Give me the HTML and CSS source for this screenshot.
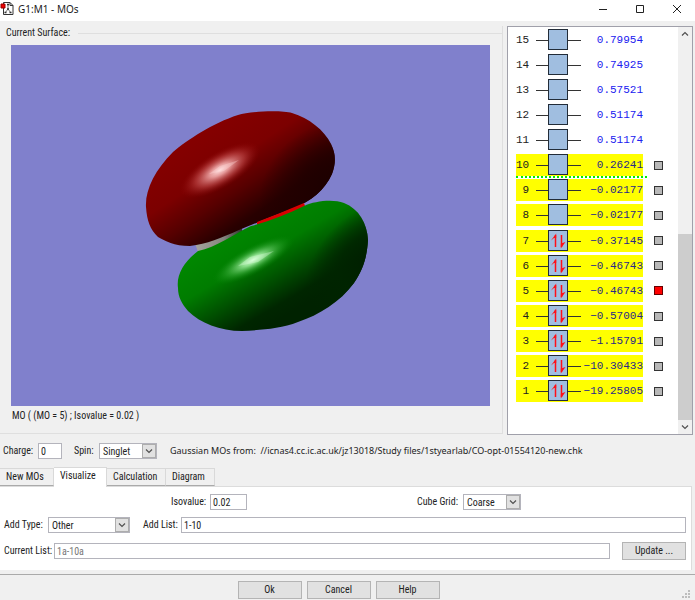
FILE: index.html
```html
<!DOCTYPE html>
<html lang="en">
<head>
<meta charset="utf-8">
<title>G1:M1 - MOs</title>
<link rel="stylesheet" href="styles.css">
</head>
<body>
<svg class="defs" width="0" height="0" aria-hidden="true">
  <symbol id="empty" viewBox="0 0 45 21"><path d="M0 11.500H45" stroke="#333"/><rect x="12.500" y=".5" width="19" height="20" fill="#a0bee0" stroke="#222c38"/></symbol>
  <symbol id="pair" viewBox="0 0 45 21"><path d="M0 11.500H45" stroke="#333"/><rect x="12.500" y=".5" width="19" height="20" fill="#a0bee0" stroke="#222c38"/><path d="M19.500 17V5M25.500 5V17" fill="none" stroke="#ff1018" stroke-width="1.500"/><path d="M20.200 3.500V8L18 8L15 10.500ZM24.800 18.500V13.500L26.500 13L29.500 12Z" fill="#ff1018"/></symbol>
  <symbol id="chevron" viewBox="0 0 8 8"><path d="M1 2.500L4 5.500L7 2.500" fill="none" stroke="#505050" stroke-width="1.200"/></symbol>
</svg>
<div class="window">
  <header class="titlebar">
    <svg class="app-icon" viewBox="0 0 14 15"><path d="M3.500 1.500H10L13 4.500V13.500H3.500Z" fill="#fff" stroke="#333"/><path d="M10 1.500V4.500H13" fill="none" stroke="#333"/><path d="M8 4V8L5 12M8 8L11 12" fill="none" stroke="#777"/><path d="M7 3.500H9M7 8H9M4.500 11.500H6.500M9.500 11.500H11.500" stroke="#333" stroke-width="1.500"/><path d="M1 3H5V7H1Z" fill="#f00000" stroke="#900"/></svg>
    <h1>G1:M1 - MOs</h1>
    <button class="win-btn" aria-label="Minimize"><svg viewBox="0 0 10 10"><path d="M1 5.500H9" stroke="#222"/></svg></button>
    <button class="win-btn" aria-label="Maximize"><svg viewBox="0 0 10 10"><path d="M1.500 1.500H8.500V8.500H1.500Z" fill="none" stroke="#222"/></svg></button>
    <button class="win-btn" aria-label="Close"><svg viewBox="0 0 10 10"><path d="M1 1L9 9M9 1L1 9" stroke="#222"/></svg></button>
  </header>

  <main class="workspace">
    <section class="surface">
      <h2>Current Surface:</h2>
      <div class="viewport">
        <svg viewBox="11 45 479 361" role="img" aria-label="Molecular orbital surface">
          <defs>
            <linearGradient id="redBody" gradientUnits="userSpaceOnUse" x1="205" y1="130" x2="268" y2="226"><stop offset="0" stop-color="#850000"/><stop offset=".35" stop-color="#7c0000"/><stop offset=".6" stop-color="#560000"/><stop offset=".85" stop-color="#280000"/><stop offset="1" stop-color="#200000"/></linearGradient>
            <radialGradient id="redShade" gradientUnits="userSpaceOnUse" cx="0" cy="0" r="1" gradientTransform="translate(330 185) rotate(-35) scale(75 60)"><stop offset="0" stop-color="#1c0000"/><stop offset=".4" stop-color="#200000" stop-opacity=".85"/><stop offset="1" stop-color="#200000" stop-opacity="0"/></radialGradient>
            <linearGradient id="greenBody" gradientUnits="userSpaceOnUse" x1="240" y1="228" x2="290" y2="313"><stop offset="0" stop-color="#008800"/><stop offset=".35" stop-color="#007c00"/><stop offset=".62" stop-color="#005000"/><stop offset=".87" stop-color="#002600"/><stop offset="1" stop-color="#002200"/></linearGradient>
            <radialGradient id="greenShade" gradientUnits="userSpaceOnUse" cx="0" cy="0" r="1" gradientTransform="translate(365 260) rotate(-45) scale(70 45)"><stop offset="0" stop-color="#002000"/><stop offset=".45" stop-color="#002400" stop-opacity=".85"/><stop offset="1" stop-color="#002400" stop-opacity="0"/></radialGradient>
            <radialGradient id="redGlow"><stop offset="0" stop-color="#ffe0e0"/><stop offset=".25" stop-color="#f0a8a8" stop-opacity=".9"/><stop offset=".6" stop-color="#c85050" stop-opacity=".55"/><stop offset="1" stop-color="#880000" stop-opacity="0"/></radialGradient>
            <radialGradient id="greenGlow"><stop offset="0" stop-color="#d8ffd8"/><stop offset=".25" stop-color="#98e898" stop-opacity=".9"/><stop offset=".6" stop-color="#40b040" stop-opacity=".55"/><stop offset="1" stop-color="#008000" stop-opacity="0"/></radialGradient>
            <linearGradient id="bond" x1="0" x2="1"><stop offset="0" stop-color="#a5a59e"/><stop offset=".6" stop-color="#85857f"/><stop offset="1" stop-color="#30302c"/></linearGradient>
          </defs>
          <path d="M195 243L198 252Q222 250 243 233L241 226Z" fill="url(#bond)"/>
          <path d="M146 207C145 190 155 170 173 152C187 140 213 123 238 115C250 111 282 110 292 113C309 118 324 130 331 144C336 154 336 163 332 174C325 190 311 201 294 208C276 215 256 223 239 230C221 238 207 244 190 246C174 246 165 241 158 237C150 229 147 221 146 207Z" fill="url(#redBody)"/>
          <path d="M146 207C145 190 155 170 173 152C187 140 213 123 238 115C250 111 282 110 292 113C309 118 324 130 331 144C336 154 336 163 332 174C325 190 311 201 294 208C276 215 256 223 239 230C221 238 207 244 190 246C174 246 165 241 158 237C150 229 147 221 146 207Z" fill="url(#redShade)"/>
          <ellipse cx="220" cy="170" rx="46" ry="18" transform="rotate(-31 220 170)" fill="url(#redGlow)"/>
          <path d="M209 174L220 166L239 160L224 171Z" fill="#ffdada" opacity=".35"/>
          <path d="M257 225Q284 220 305 206L304 203Q281 213 257 222Z" fill="#d80000"/>
          <path d="M178 288C176 274 185 261 198 251C216 248 235 233 251 226C270 221 288 214 304 206C315 201 333 199 344 203C359 209 367 223 368 240C367 257 363 270 354 283C340 302 319 315 298 322C280 329 260 330 242 331C220 331 200 323 188 311C182 304 178 297 178 288Z" fill="url(#greenBody)"/>
          <path d="M178 288C176 274 185 261 198 251C216 248 235 233 251 226C270 221 288 214 304 206C315 201 333 199 344 203C359 209 367 223 368 240C367 257 363 270 354 283C340 302 319 315 298 322C280 329 260 330 242 331C220 331 200 323 188 311C182 304 178 297 178 288Z" fill="url(#greenShade)"/>
          <ellipse cx="253" cy="260" rx="46" ry="14" transform="rotate(-28 253 260)" fill="url(#greenGlow)"/>
          <path d="M238 266L250 257L274 251L258 262Z" fill="#e0ffe0" opacity=".35"/>
        </svg>
      </div>
      <p class="caption">MO ( (MO = 5) ; Isovalue = 0.02 )</p>
    </section>

    <section class="orbitals">
      <table class="levels">
        <tbody>
          <tr><td>15</td><td><svg><use href="#empty"/></svg></td><td>0.79954</td></tr>
          <tr><td>14</td><td><svg><use href="#empty"/></svg></td><td>0.74925</td></tr>
          <tr><td>13</td><td><svg><use href="#empty"/></svg></td><td>0.57521</td></tr>
          <tr><td>12</td><td><svg><use href="#empty"/></svg></td><td>0.51174</td></tr>
          <tr><td>11</td><td><svg><use href="#empty"/></svg></td><td>0.51174</td></tr>
          <tr class="on frontier"><td>10</td><td><svg><use href="#empty"/></svg></td><td>0.26241</td><td><input type="radio" name="mo" aria-label="Show MO 10"></td></tr>
          <tr class="on"><td>9</td><td><svg><use href="#empty"/></svg></td><td>−0.02177</td><td><input type="radio" name="mo" aria-label="Show MO 9"></td></tr>
          <tr class="on"><td>8</td><td><svg><use href="#empty"/></svg></td><td>−0.02177</td><td><input type="radio" name="mo" aria-label="Show MO 8"></td></tr>
          <tr class="on"><td>7</td><td><svg><use href="#pair"/></svg></td><td>−0.37145</td><td><input type="radio" name="mo" aria-label="Show MO 7"></td></tr>
          <tr class="on"><td>6</td><td><svg><use href="#pair"/></svg></td><td>−0.46743</td><td><input type="radio" name="mo" aria-label="Show MO 6"></td></tr>
          <tr class="on"><td>5</td><td><svg><use href="#pair"/></svg></td><td>−0.46743</td><td><input type="radio" name="mo" aria-label="Show MO 5" checked></td></tr>
          <tr class="on"><td>4</td><td><svg><use href="#pair"/></svg></td><td>−0.57004</td><td><input type="radio" name="mo" aria-label="Show MO 4"></td></tr>
          <tr class="on"><td>3</td><td><svg><use href="#pair"/></svg></td><td>−1.15791</td><td><input type="radio" name="mo" aria-label="Show MO 3"></td></tr>
          <tr class="on"><td>2</td><td><svg><use href="#pair"/></svg></td><td>−10.30433</td><td><input type="radio" name="mo" aria-label="Show MO 2"></td></tr>
          <tr class="on"><td>1</td><td><svg><use href="#pair"/></svg></td><td>−19.25805</td><td><input type="radio" name="mo" aria-label="Show MO 1"></td></tr>
        </tbody>
      </table>
      <div class="scrollbar">
        <button aria-label="Scroll up"><svg class="up"><use href="#chevron"/></svg></button>
        <div class="track"><div class="thumb"></div></div>
        <button aria-label="Scroll down"><svg><use href="#chevron"/></svg></button>
      </div>
    </section>
  </main>

  <div class="state">
    <label for="charge">Charge:</label><input id="charge" class="charge" value="0">
    <label for="spin" class="spin-label">Spin:</label>
    <span class="select spin"><select id="spin"><option>Singlet</option></select><svg><use href="#chevron"/></svg></span>
    <p class="source">Gaussian MOs from: &nbsp;//icnas4.cc.ic.ac.uk/jz13018/Study files/1styearlab/CO-opt-01554120-new.chk</p>
  </div>

  <nav class="tabs" role="tablist">
    <button role="tab" class="t-new">New MOs</button><button role="tab" class="active" aria-selected="true">Visualize</button><button role="tab" class="t-calc">Calculation</button><button role="tab" class="t-diag">Diagram</button>
  </nav>
  <section class="panel">
    <div class="row split">
      <div class="field"><label for="iso">Isovalue:</label><input id="iso" class="iso" value="0.02"></div>
      <div class="field"><label for="grid">Cube Grid:</label><span class="select grid"><select id="grid"><option>Coarse</option></select><svg><use href="#chevron"/></svg></span></div>
    </div>
    <div class="row">
      <label for="type" class="w-type">Add Type:</label><span class="select type"><select id="type"><option>Other</option></select><svg><use href="#chevron"/></svg></span>
      <label for="list" class="w-list">Add List:</label><input id="list" class="fill" value="1-10">
    </div>
    <div class="row">
      <label for="current" class="w-current">Current List:</label><input id="current" class="fill muted" value="1a-10a" readonly>
      <button class="btn update">Update ...</button>
    </div>
  </section>

  <footer class="actions">
    <button class="btn">Ok</button><button class="btn">Cancel</button><button class="btn">Help</button>
    <svg class="grip" viewBox="0 0 8 8"><path d="M6 0h2v2h-2zM3 3h2v2h-2zM6 3h2v2h-2zM0 6h2v2h-2zM3 6h2v2h-2zM6 6h2v2h-2z" fill="#bdbdbd"/></svg>
  </footer>
</div>
</body>
</html>
```
FILE: styles.css
```css
* { box-sizing: border-box; }
body { margin: 0; background: #f0f0f0; color: #222; font: 10px/14px "Roboto Condensed", "Liberation Sans", sans-serif; }
h1, h2, p { margin: 0; font-weight: 400; }
input, select, button { font: inherit; color: inherit; margin: 0; border-radius: 0; }
label { white-space: nowrap; }
.defs { position: absolute; }
.window { min-height: 100vh; display: flex; flex-direction: column; }

.titlebar { display: flex; align-items: center; height: 21px; background: #fff; padding-bottom: 4px; }
.app-icon { width: 14px; height: 15px; margin-right: 4px; }
.titlebar h1 { flex: 1; font: 10px/16px "Noto Sans", sans-serif; }
.win-btn { width: 37px; padding: 0; border: 0; background: none; display: flex; justify-content: center; }
.win-btn svg { width: 10px; height: 10px; }

.workspace { flex: 1; display: flex; padding: 5px 2px 0 0; gap: 4px; }
.surface { flex: 1; display: flex; flex-direction: column; margin-bottom: 1px; border: 1px solid #dfdfdf; border-left: 0; border-top: 0; padding-right: 12px; }
.surface h2 { display: flex; align-items: center; gap: 8px; font-size: 10px; padding-left: 6px; margin-right: -12px; }
.surface h2::after { content: ""; flex: 1; border-top: 1px solid #dfdfdf; }
.viewport { flex: 1; display: flex; margin: 5px 0 0 11px; background: #8080cc; }
.viewport svg { width: 100%; height: 100%; }
.caption { padding: 3px 12px 10px; }

.orbitals { width: 186px; display: flex; border: 1px solid #a0a0aa; background: #fff; height: 409px; }
.levels { flex: 1; display: grid; padding: 0 0 30px 8px; font: 11px/22px "Liberation Mono", monospace; }
.levels tbody { display: grid; grid-auto-rows: 1fr; }
.levels tr { display: grid; grid-template-columns: 20px 45px 62px 20px; align-items: center; position: relative; }
.levels td { padding: 0; height: 22px; }
.levels td:first-child { text-align: right; padding-right: 7px; }
.levels td:nth-child(3) { text-align: right; color: #2020f0; }
.levels td svg { display: block; width: 45px; height: 21px; }
.on td:not(:last-child) { background: #ff0; }
.levels .on td:nth-child(3) { color: #282888; }
.levels td:nth-child(4) { display: flex; align-items: center; justify-content: flex-end; }
.levels input { appearance: none; width: 9px; height: 9px; border: 1px solid #333; background: #b8b8b8; }
.levels input:checked { background: #f00; border-color: #600; }
.frontier::after { content: ""; position: absolute; left: 0; bottom: 0; width: 131px; border-top: 2px dotted #0e0; }
.scrollbar { width: 14px; display: flex; flex-direction: column; background: #f0f0f0; }
.scrollbar button { height: 14px; padding: 0; border: 0; background: none; display: flex; align-items: center; justify-content: center; }
.scrollbar svg { width: 8px; height: 8px; }
.up { transform: rotate(180deg); }
.track { flex: 1; display: flex; align-items: flex-end; }
.thumb { width: 100%; height: 49%; background: #cdcdcd; }

input, .select { height: 16px; border: 1px solid #b4b4bc; background: #fff; }
input { padding: 0 2px; }
.select { display: flex; }
.select select { appearance: none; flex: 1; min-width: 0; border: 0; background: none; padding: 0 3px; line-height: 13px; }
.select svg { width: 14px; height: 14px; padding: 2px; background: #e1e1e1; border: 1px solid #adadad; }
.state { display: flex; align-items: center; height: 32px; padding-left: 3px; }
.charge { width: 24px; margin-left: 7px; }
.state label { width: 28px; }
.state label.spin-label { width: 25px; margin-left: 12px; }
.spin, .grid { width: 58px; }
.source { margin-left: 13px; font: 9px/14px "Noto Sans", sans-serif; white-space: nowrap; }

.tabs { display: flex; align-items: flex-end; height: 20px; border-bottom: 1px solid #dcdcdc; margin-right: 3px; }
.tabs button { height: 18px; padding: 0 6px; border: 1px solid #d9d9d9; border-width: 1px 1px 1px 0; border-bottom-color: #aaa; background: #f0f0f0; text-align: left; white-space: nowrap; }
.tabs .t-new { width: 54px; }
.tabs .active { width: 53px; height: 20px; margin-bottom: -1px; background: #fff; border-bottom: 0; padding-bottom: 3px; }
.tabs .t-calc { width: 59px; }
.tabs .t-diag { width: 49px; }
.panel { margin-right: 3px; padding: 7px 5px 10px 4px; background: #fff; border-right: 1px solid #dcdcdc; display: flex; flex-direction: column; gap: 7px; }
.row { display: flex; align-items: center; }
.row:last-child { margin-top: 2px; }
.split { display: grid; grid-template-columns: 246px 1fr; padding-left: 167px; }
.field { display: flex; align-items: center; }
.field label { width: 39px; }
.field + .field label { width: 46px; }
.iso { width: 37px; }
.w-type { width: 44px; }
.type { width: 82px; }
.w-list { width: 38px; margin-left: 13px; }
.w-current { width: 50px; }
.fill { flex: 1; min-width: 0; }
.muted { color: #777; }
.btn { width: 64px; height: 18px; padding: 0; border: 1px solid #b4b4b4; background: #e1e1e1; }
.update { margin-left: 12px; }
.actions { position: relative; display: flex; justify-content: center; gap: 5px; margin-top: 4px; padding: 6px 18px 1px 0; border-top: 1px solid #aaa; }
.grip { position: absolute; right: 5px; bottom: 2px; width: 8px; height: 8px; }
```
